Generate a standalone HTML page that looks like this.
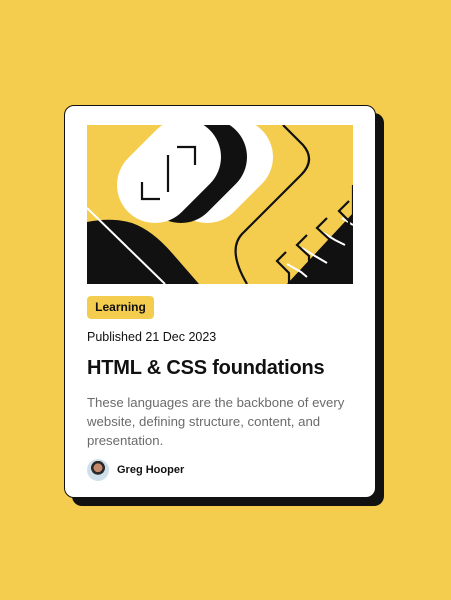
<!DOCTYPE html>
<html><head><style>
body{margin:0;width:451px;height:600px;background:#f4cd4e;font-family:"Liberation Sans",sans-serif;position:relative;overflow:hidden}
.card{position:absolute;left:64px;top:105px;width:310px;height:391px;background:#fff;border:1px solid #111;border-radius:10px;box-shadow:8px 8px 0 #111}
.img{position:absolute;left:22px;top:19px;width:266px;height:159px}
.tag{position:absolute;left:22px;top:190px;width:67px;height:23px;background:#f4cd4e;border-radius:4px;font-weight:bold;font-size:12px;line-height:23px;text-align:center;color:#111}
.pub{position:absolute;left:22px;top:224px;font-size:12.5px;color:#111}
h1{position:absolute;left:22px;top:251px;margin:0;font-size:20px;font-weight:bold;color:#111;letter-spacing:-0.2px}
.desc{position:absolute;left:22px;top:287px;width:275px;font-size:13.2px;line-height:19px;color:#6b6b6b}
.av{position:absolute;left:22px;top:353px;width:22px;height:22px;border-radius:50%;background:radial-gradient(circle at 50% 40%,#c48a6a 0 25%,#2a2a2a 26% 40%,#cfe0ea 41%)}
.name{position:absolute;left:52px;top:358px;font-size:11px;font-weight:bold;color:#111}
</style></head><body>
<div class="card">
<svg class="img" viewBox="0 0 266 159">
<rect width="266" height="159" fill="#f4cd4e"/>
<g stroke-linecap="round" stroke-width="76">
<line x1="120" y1="60" x2="148" y2="32" stroke="#fff"/>
<line x1="94" y1="60" x2="122" y2="32" stroke="#111"/>
<line x1="68" y1="60" x2="96" y2="32" stroke="#fff"/>
</g>
<rect x="0" y="-60" width="266" height="60" fill="#fff"/>
<path d="M90,22 H108 V40 M81,30 V67 M55,57 V74 H73" stroke="#111" stroke-width="2.2" fill="none"/>
<path d="M0,97 Q25,92 45,98 Q65,105 85,128 L112,159 L0,159 Z" fill="#111"/>
<path d="M0,83 L78,159" stroke="#fff" stroke-width="2"/>
<path d="M196,0 L216,20 Q229,35 214,50 L155,109 Q140,125 160,159" stroke="#111" stroke-width="2.2" fill="none"/>
<path d="M200,159 L266,88 L266,159 Z" fill="#111"/>
<path d="M200,139 L214,147 L220,152 M215,123 L228,131 L240,138 M235,107 L248,115 L258,120 M255,93 L266,100" stroke="#fff" stroke-width="2" fill="none"/>
<path d="M199,127 L190,136 L202,148 V158 M220,110 L210,120 L222,131 V140 M240,93 L230,103 L242,114 V122 M262,76 L252,86 L262,96 V104 M266,60 V90" stroke="#111" stroke-width="2.2" fill="none"/>
</svg>
<div class="tag">Learning</div>
<div class="pub">Published 21 Dec 2023</div>
<h1>HTML &amp; CSS foundations</h1>
<div class="desc">These languages are the backbone of every website, defining structure, content, and presentation.</div>
<div class="av"></div>
<div class="name">Greg Hooper</div>
</div>
</body></html>
